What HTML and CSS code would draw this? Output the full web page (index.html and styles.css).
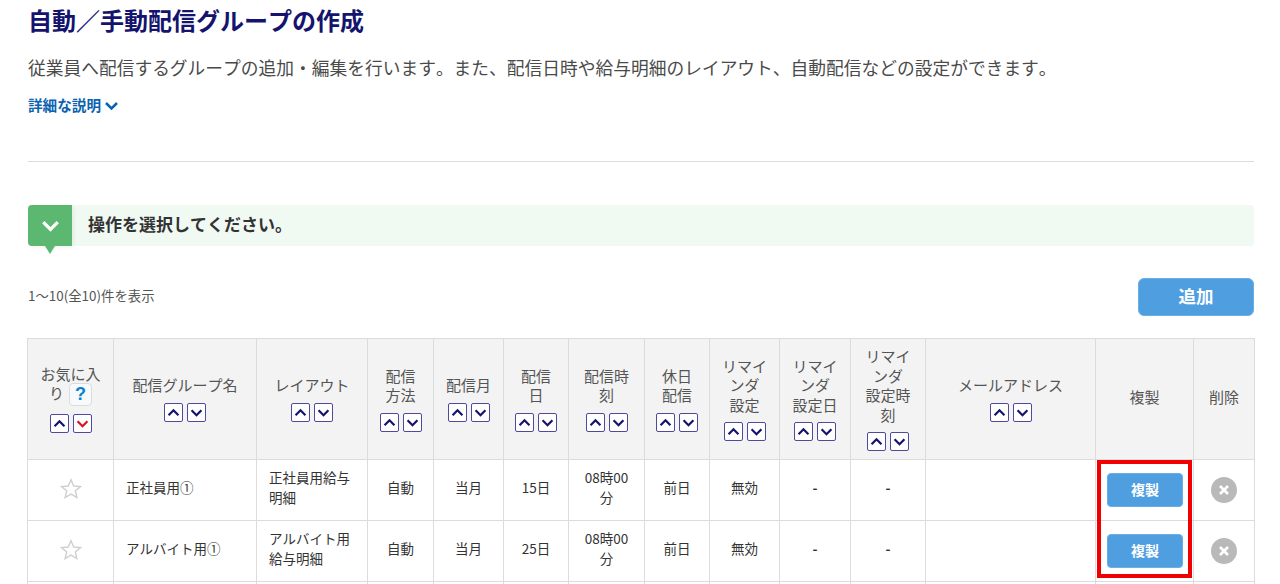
FILE: index.html
```html
<!DOCTYPE html>
<html lang="ja">
<head>
<meta charset="utf-8">
<title>自動／手動配信グループの作成</title>
<link rel="stylesheet" href="styles.css">
</head>
<body>
<svg class="defs" width="0" height="0" aria-hidden="true">
  <symbol id="up" viewBox="0 0 19 19"><path d="M4 12.500 9.500 7l5.500 5.500" fill="none" stroke="currentColor" stroke-width="2.500"/></symbol>
  <symbol id="down" viewBox="0 0 19 19"><path d="M4 7l5.500 5.500L15 7" fill="none" stroke="currentColor" stroke-width="2.500"/></symbol>
  <symbol id="star" viewBox="0 0 22 22"><path d="M11 1.800l2.700 6.200 6.700.6-5.100 4.400 1.600 6.600L11 16.100l-5.900 3.500 1.600-6.600L1.600 8.600l6.700-.6z" fill="none" stroke="currentColor" stroke-width="1.400"/></symbol>
  <symbol id="del" viewBox="0 0 26 26"><circle cx="13" cy="13" r="13" fill="#b9b9b9"/><path d="M9 9l8 8M17 9l-8 8" stroke="#fff" stroke-width="2.600"/></symbol>
</svg>
<main class="page">
  <h1 class="title">自動／手動配信グループの作成</h1>
  <p class="lead">従業員へ配信するグループの追加・編集を行います。また、配信日時や給与明細のレイアウト、自動配信などの設定ができます。</p>
  <a class="more">詳細な説明<svg class="more-icon" viewBox="0 0 19 19"><use href="#down"/></svg></a>
  <hr class="rule">
  <div class="notice">
    <div class="notice-tab"><svg class="notice-icon" viewBox="0 0 19 19"><use href="#down"/></svg></div>
    <p class="notice-text">操作を選択してください。</p>
  </div>
  <div class="toolbar">
    <span class="count">1～10(全10)件を表示</span>
    <button class="add">追加</button>
  </div>
  <div class="table-wrap">
    <table class="grid">
      <colgroup>
        <col class="c1"><col class="c2"><col class="c3"><col class="c4"><col class="c5"><col class="c6"><col class="c7"><col class="c8"><col class="c9"><col class="c10"><col class="c11"><col class="c12"><col class="c13"><col class="c14">
      </colgroup>
      <thead>
        <tr>
          <th>お気に入り<span class="help">?</span><div class="sort"><span class="sort-btn"><svg><use href="#up"/></svg></span><span class="sort-btn active"><svg><use href="#down"/></svg></span></div></th>
          <th>配信グループ名<div class="sort"><span class="sort-btn"><svg><use href="#up"/></svg></span><span class="sort-btn"><svg><use href="#down"/></svg></span></div></th>
          <th>レイアウト<div class="sort"><span class="sort-btn"><svg><use href="#up"/></svg></span><span class="sort-btn"><svg><use href="#down"/></svg></span></div></th>
          <th>配信方法<div class="sort"><span class="sort-btn"><svg><use href="#up"/></svg></span><span class="sort-btn"><svg><use href="#down"/></svg></span></div></th>
          <th>配信月<div class="sort"><span class="sort-btn"><svg><use href="#up"/></svg></span><span class="sort-btn"><svg><use href="#down"/></svg></span></div></th>
          <th>配信日<div class="sort"><span class="sort-btn"><svg><use href="#up"/></svg></span><span class="sort-btn"><svg><use href="#down"/></svg></span></div></th>
          <th>配信時刻<div class="sort"><span class="sort-btn"><svg><use href="#up"/></svg></span><span class="sort-btn"><svg><use href="#down"/></svg></span></div></th>
          <th>休日配信<div class="sort"><span class="sort-btn"><svg><use href="#up"/></svg></span><span class="sort-btn"><svg><use href="#down"/></svg></span></div></th>
          <th>リマインダ<br>設定<div class="sort"><span class="sort-btn"><svg><use href="#up"/></svg></span><span class="sort-btn"><svg><use href="#down"/></svg></span></div></th>
          <th>リマインダ<br>設定日<div class="sort"><span class="sort-btn"><svg><use href="#up"/></svg></span><span class="sort-btn"><svg><use href="#down"/></svg></span></div></th>
          <th>リマインダ<br>設定時刻<div class="sort"><span class="sort-btn"><svg><use href="#up"/></svg></span><span class="sort-btn"><svg><use href="#down"/></svg></span></div></th>
          <th>メールアドレス<div class="sort"><span class="sort-btn"><svg><use href="#up"/></svg></span><span class="sort-btn"><svg><use href="#down"/></svg></span></div></th>
          <th class="plain">複製</th>
          <th class="plain">削除</th>
        </tr>
      </thead>
      <tbody>
        <tr>
          <td class="icon-cell"><svg class="star"><use href="#star"/></svg></td>
          <td class="left">正社員用①</td>
          <td class="left">正社員用給与明細</td>
          <td>自動</td><td>当月</td><td>15日</td><td>08時00分</td><td>前日</td><td>無効</td><td class="dash">-</td><td class="dash">-</td><td></td>
          <td class="copy-cell"><button class="copy">複製</button></td>
          <td class="action-cell"><svg class="del"><use href="#del"/></svg></td>
        </tr>
        <tr>
          <td class="icon-cell"><svg class="star"><use href="#star"/></svg></td>
          <td class="left">アルバイト用①</td>
          <td class="left">アルバイト用給与明細</td>
          <td>自動</td><td>当月</td><td>25日</td><td>08時00分</td><td>前日</td><td>無効</td><td class="dash">-</td><td class="dash">-</td><td></td>
          <td class="copy-cell"><button class="copy">複製</button></td>
          <td class="action-cell"><svg class="del"><use href="#del"/></svg></td>
        </tr>
        <tr class="next">
          <td></td><td></td><td></td><td></td><td></td><td></td><td></td><td></td><td></td><td></td><td></td><td></td><td></td><td></td>
        </tr>
      </tbody>
    </table>
    <div class="highlight"></div>
  </div>
</main>
</body>
</html>
```
FILE: styles.css
```css
* { box-sizing: border-box; }
html, body { margin: 0; height: 100%; overflow: hidden; background: #fff; }
body {
  font-family: "Noto Sans CJK JP", "Noto Sans", sans-serif;
  font-kerning: none;
  font-feature-settings: "palt" 0, "kern" 0;
  color: #333;
}
.defs { position: absolute; }
.page { padding: 0 26px 0 28px; }
.title {
  margin: 0;
  padding-top: 5px;
  font-size: 24px;
  line-height: 30px;
  font-weight: 700;
  color: #14146e;
}
.lead {
  margin: 18px 0 0;
  font-size: 17.740px;
  line-height: 28px;
  color: #4a4a4a;
  white-space: nowrap;
}
.more {
  display: flex;
  align-items: center;
  gap: 1px;
  margin-top: 13px;
  font-size: 14.600px;
  line-height: 22px;
  font-weight: 700;
  color: #0b63b0;
}
.more-icon { width: 19px; height: 19px; }
.rule {
  margin: 45px 0 0;
  border: 0;
  border-top: 1px solid #dcdcdc;
}
.notice {
  display: flex;
  align-items: center;
  margin-top: 43px;
  height: 41px;
  background: #f1f9f3;
  border-radius: 4px;
}
.notice-tab {
  position: relative;
  display: flex;
  align-items: center;
  justify-content: center;
  width: 44px;
  height: 41px;
  background: #5cb870;
  border-radius: 4px 0 0 4px;
  box-shadow: 2px 1px 4px rgba(0, 0, 0, .06);
  color: #fff;
}
.notice-tab::after {
  content: "";
  position: absolute;
  left: 17px;
  top: 41px;
  border-style: solid;
  border-width: 8px 5px 0;
  border-color: #5cb870 transparent transparent;
}
.notice-icon { width: 25px; height: 25px; }
.notice-text {
  margin: 0 0 4px 16px;
  font-size: 17px;
  line-height: 26px;
  font-weight: 700;
  color: #333;
}
.toolbar {
  display: flex;
  align-items: center;
  justify-content: space-between;
  margin-top: 32px;
  height: 38px;
}
.count { margin-bottom: 4px; font-size: 13.400px; line-height: 18px; color: #555; }
.add {
  width: 116px;
  height: 38px;
  padding: 0 0 4px;
  border: 1px solid #6aaee6;
  border-radius: 6px;
  background: #4f9fe0;
  color: #fff;
  font: 700 17.500px "Noto Sans CJK JP", sans-serif;
}
.table-wrap { position: relative; margin: 22px 1px 0 -1px; }
.grid {
  width: 100%;
  table-layout: fixed;
  border-collapse: collapse;
  font-size: 13.500px;
  line-height: 20.500px;
}
.c1 { width: 86px; }
.c2 { width: 143px; }
.c3 { width: 111px; }
.c4 { width: 66px; }
.c5 { width: 70px; }
.c6 { width: 65px; }
.c7 { width: 76px; }
.c8 { width: 65px; }
.c9 { width: 70px; }
.c10 { width: 71px; }
.c11 { width: 75px; }
.c12 { width: 170px; }
.c13 { width: 98px; }
.c14 { width: 61px; }
.grid th, .grid td {
  border: 1px solid #dcdcdc;
  padding: 0 12px;
  text-align: center;
  vertical-align: middle;
}
.grid th {
  height: 121px;
  padding-bottom: 1px;
  background: #f3f3f3;
  font-size: 15px;
  line-height: 19.500px;
  font-weight: 400;
  color: #555;
}
.grid th.plain { padding-bottom: 4px; }
.grid td { height: 61px; padding-bottom: 6px; color: #333; }
.grid td.left { text-align: left; }
.grid td.dash { font-weight: 700; }
.grid td.icon-cell { padding-bottom: 4px; }
.grid td.action-cell { padding-bottom: 0; }
.grid td.copy-cell { padding: 0 13px 0 11px; }
.next td { height: 20px; }
.sort {
  display: flex;
  justify-content: center;
  gap: 4px;
  margin-top: 8px;
}
.sort-btn {
  display: block;
  width: 19px;
  height: 19px;
  border: 1px solid #4f4a9e;
  border-radius: 2px;
  background: #fff;
  color: #14146e;
}
.sort-btn svg { display: block; width: 17px; height: 17px; }
.sort-btn.active { color: #e0101c; }
.help {
  display: inline-block;
  width: 23px;
  height: 23px;
  margin-left: 5px;
  border: 1px solid #dcdcdc;
  border-radius: 4px;
  background: #f7fafc;
  color: #0b7fd0;
  font-family: "Liberation Sans", sans-serif;
  font-size: 18px;
  line-height: 21px;
  font-weight: 700;
  vertical-align: middle;
}
.star { width: 22px; height: 22px; color: #cfcfcf; vertical-align: middle; }
.del { width: 26px; height: 26px; vertical-align: middle; }
.copy {
  display: block;
  width: 76px;
  height: 34px;
  margin: 0 auto;
  padding: 0 0 2px;
  border: 1px solid #6aaee6;
  border-radius: 4px;
  background: #4f9fe0;
  color: #fff;
  font: 700 14px "Noto Sans CJK JP", sans-serif;
}
.highlight {
  position: absolute;
  left: 1070px;
  top: 122px;
  width: 95px;
  height: 118px;
  border: 4px solid #f00000;
}
```
